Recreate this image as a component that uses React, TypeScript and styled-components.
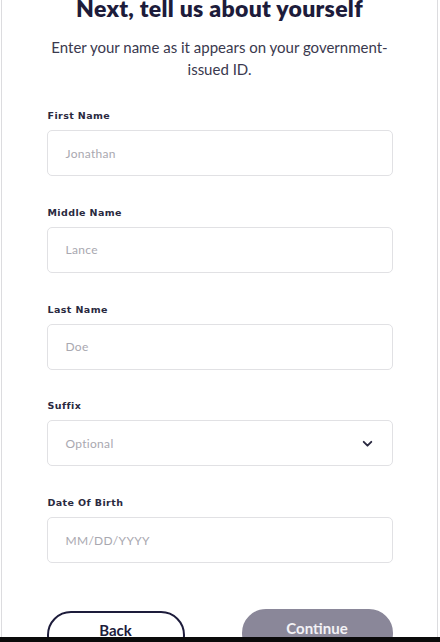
import styled, { createGlobalStyle } from 'styled-components';

const GlobalStyle = createGlobalStyle`
	html, body {
		margin: 0;
		padding: 0;
		background: #ffffff;
		overflow: hidden;
	}
	* {
		box-sizing: border-box;
	}
`;

const Screen = styled.div`
	width: 440px;
	height: 642px;
	display: flex;
	flex-direction: column;
	background: #ffffff;
	font-family: 'Lato', 'Noto Sans', sans-serif;
`;

const Frame = styled.div`
	flex: 1;
	margin: 0 2px 0 1px;
	border-left: 1px solid #dcdcdf;
	border-right: 1px solid #dcdcdf;
	overflow: hidden;
	display: flex;
	flex-direction: column;
	align-items: center;
`;

const Title = styled.h1`
	margin: -6px 0 0;
	font-size: 23px;
	line-height: 28px;
	font-weight: 800;
	color: #1d1c3b;
	letter-spacing: 0.3px;
	text-align: center;
`;

const Intro = styled.p`
	margin: 14px 0 0;
	width: 360px;
	font-size: 15px;
	line-height: 22px;
	color: #3a394e;
	text-align: center;
`;

const Form = styled.form`
	width: 346px;
	margin-top: 30px;
	display: flex;
	flex-direction: column;
	gap: 30.75px;
`;

const Field = styled.label`
	display: flex;
	flex-direction: column;
	gap: 9px;
`;

const LabelText = styled.span`
	font-family: 'DejaVu Sans', sans-serif;
	font-size: 9.5px;
	font-weight: 700;
	letter-spacing: 0.4px;
	color: #2a2940;
	padding-left: 1px;
`;

const InputBox = styled.div`
	height: 46px;
	border: 1.5px solid #e1e1e4;
	border-radius: 5px;
	display: flex;
	align-items: center;
	justify-content: space-between;
	padding: 0 18px 0 18px;
	font-size: 12px;
	color: #a9a8b0;
	letter-spacing: 0.3px;
`;

const Chevron = styled.svg`
	width: 13px;
	height: 13px;
	color: #2a2940;
`;

const Actions = styled.div`
	width: 346px;
	margin-top: 46px;
	display: flex;
	justify-content: space-between;
	align-items: flex-start;
`;

const PillButton = styled.button<{ $filled?: boolean }>`
	width: ${(p) => (p.$filled ? '151px' : '138px')};
	height: 48px;
	margin-top: ${(p) => (p.$filled ? '0' : '2px')};
	border-radius: 24px;
	border: 2px solid ${(p) => (p.$filled ? '#8a8799' : '#1d1c3b')};
	background: ${(p) => (p.$filled ? '#8a8799' : '#ffffff')};
	color: ${(p) => (p.$filled ? '#f2f1f5' : '#1d1c3b')};
	font-family: 'Lato', sans-serif;
	font-size: 15px;
	font-weight: 700;
	padding: 0 0 18px;
	display: flex;
	align-items: flex-end;
	justify-content: center;
`;

const BottomBar = styled.div`
	height: 5px;
	background: #0b0b0b;
`;

const fields = [
	{ label: 'First Name', value: 'Jonathan' },
	{ label: 'Middle Name', value: 'Lance' },
	{ label: 'Last Name', value: 'Doe' },
	{ label: 'Suffix', value: 'Optional', select: true },
	{ label: 'Date Of Birth', value: 'MM/DD/YYYY' },
];

const App = () => {
	return (
		<Screen>
			<GlobalStyle />
			<Frame>
				<Title>Next, tell us about yourself</Title>
				<Intro>Enter your name as it appears on your government-issued ID.</Intro>
				<Form>
					{fields.map((f) => (
						<Field key={f.label}>
							<LabelText>{f.label}</LabelText>
							<InputBox>
								<span>{f.value}</span>
								{f.select && (
									<Chevron viewBox="0 0 24 24" fill="none" stroke="currentColor" strokeWidth="3.5" strokeLinecap="round" strokeLinejoin="round">
										<path d="M5 9l7 7 7-7" />
									</Chevron>
								)}
							</InputBox>
						</Field>
					))}
				</Form>
				<Actions>
					<PillButton type="button">Back</PillButton>
					<PillButton type="button" $filled>Continue</PillButton>
				</Actions>
			</Frame>
			<BottomBar />
		</Screen>
	);
};

export default App;
